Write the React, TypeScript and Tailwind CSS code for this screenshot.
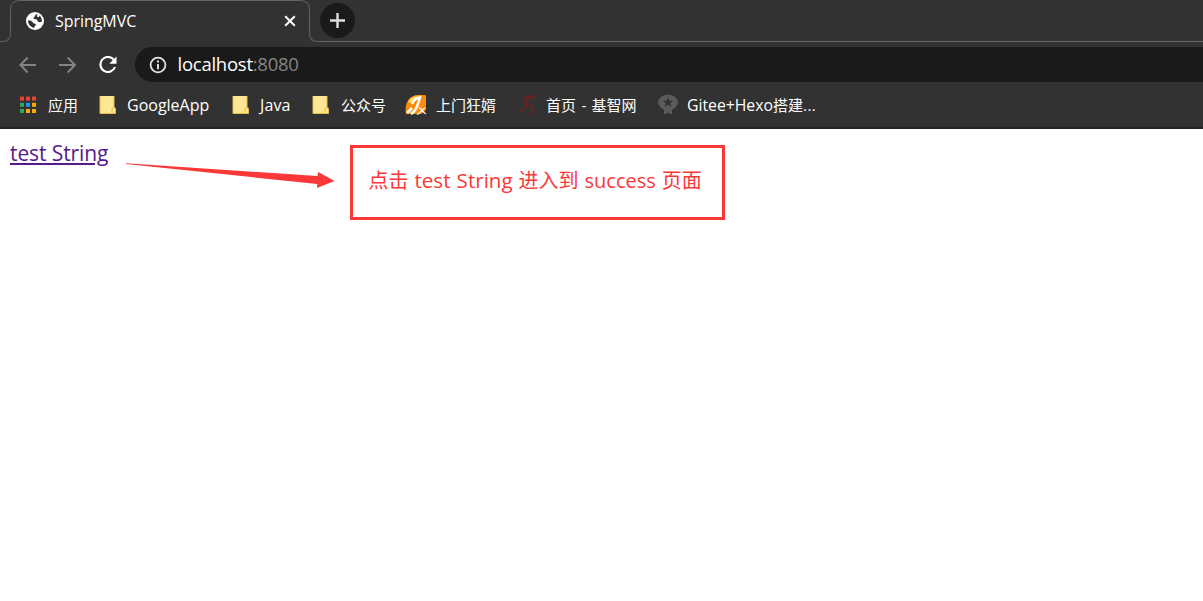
import type { ReactNode } from 'react';

const uiFont = "font-['Open_Sans','Noto_Sans_CJK_SC',sans-serif]";

function Globe() {
  return (
    <svg className="h-[18px] w-[18px] shrink-0" viewBox="0 0 18 18">
      <circle cx="9" cy="9" r="9" fill="#fff" />
      <path d="M10.4 2.3 C8.6 3.2 9.4 4.3 7.8 5.4 C6.8 6.2 8.6 7.2 10.2 7.3 C11.6 7.6 11.2 9.6 12.6 10 C13.8 10.3 15 10.2 15.9 9.6 C16.1 6.7 15 4.7 13.2 3.4 C13.6 4.6 12.6 5.4 11.6 5 C10.6 4.6 11 3.4 11.6 2.6 Z" fill="#323232" />
      <path d="M2 8.4 C2 12 4.3 14.8 8.2 15.9 C7.8 14.6 9.8 14.2 9.9 12.6 C9.8 11.4 7.2 11.8 6.6 10.2 C6.2 8.8 4.6 8.3 2 8.4 Z" fill="#323232" />
    </svg>
  );
}

function Apps() {
  const colors = ['#ea4335', '#ea4335', '#ea4335', '#34a853', '#2196f3', '#fbab05', '#34a853', '#fbab05', '#fbab05'];
  return (
    <svg className="h-[18px] w-[18px]" viewBox="0 0 18 18">
      {colors.map((c, i) => (
        <rect key={i} x={1 + (i % 3) * 6} y={0.6 + Math.floor(i / 3) * 6.2} width="4" height="4" fill={c} />
      ))}
    </svg>
  );
}

function Folder() {
  return (
    <svg className="h-[20px] w-[18px]" viewBox="0 0 18 20">
      <path d="M1 1 H15 V12 L16.5 13 V18.5 H1 Z" fill="#ffe694" />
      <path d="M1 1 V18.5 H16.5 V13.5 M15 1 V12.5 L13 14 V18" fill="none" stroke="#e6bd45" strokeWidth="1" />
    </svg>
  );
}

function OrangeLeaf() {
  return (
    <svg className="h-[22px] w-[22px]" viewBox="0 0 22 22">
      <path d="M1 20 C-1 10 4 1 13 1 H20 Q21 1 21 3 V15 Q19 20 14 20 Z" fill="#ff8b0b" />
      <path d="M3 9 Q5 2 13 2 L8 8 Z" fill="#ffd35a" />
      <path d="M15.5 2 C13.5 7 12.5 17 6 20 M15.5 3.2 C11 4 8 7 7 10 M2 19 L7 14" fill="none" stroke="#fff" strokeWidth="2.6" />
      <path d="M14 14 C17 14 17.5 19 21 20 M20 14 C17 15 16 19 12 20.5" fill="none" stroke="#fff" strokeWidth="1.3" />
    </svg>
  );
}

function RedStroke() {
  return (
    <svg className="h-[22px] w-[20px]" viewBox="0 0 20 22" fill="none" stroke="#7d1c1f" strokeWidth="1.3">
      <path d="M17 2.2 C12 1.2 8.5 3 6 5.5 C6 9 10.5 9.5 8.5 12.5 C7 15 4 15 1 17" />
      <path d="M16.5 3.8 C12 3.8 9.2 5 9 8 C10 11.5 16.5 12 15.5 16 C14.5 18.5 12.5 20 10.5 20.6" />
    </svg>
  );
}

function Ribbon() {
  return (
    <svg className="h-[22px] w-[20px]" viewBox="0 0 20 22">
      <path d="M6 13 H14 V20.5 L10 18.7 L6 20.5 Z" fill="#5b5b5b" />
      <ellipse cx="10" cy="8.5" rx="9.8" ry="7.8" fill="#5b5b5b" />
      <path d="M10 3 L11.4 6.7 L15.3 6.8 L12.2 9.2 L13.3 13 L10 10.8 L6.7 13 L7.8 9.2 L4.7 6.8 L8.6 6.7 Z" fill="#323232" />
    </svg>
  );
}

function Bookmark({ icon, iconBox, className, children }: { icon: ReactNode; iconBox: string; className: string; children: ReactNode }) {
  return (
    <div className="flex h-full shrink-0 items-center">
      <div className={`flex shrink-0 items-center ${iconBox}`}>{icon}</div>
      <span className={`shrink-0 leading-5 whitespace-nowrap text-white ${className}`}>{children}</span>
    </div>
  );
}

export default function App() {
  return (
    <div className={`flex h-[601px] w-[1203px] flex-col overflow-hidden bg-white ${uiFont}`}>
      <header className="flex h-[129px] shrink-0 flex-col border-b-2 border-[#222324] bg-[#323232]">
        <div className="flex h-[42px] shrink-0">
          <div className="-mr-px h-[12px] w-[11px] shrink-0 self-end rounded-br-[8px] border-r border-b border-[#636363]" />
          <div className="flex h-[31px] w-[300px] shrink-0 rounded-t-[9px] border border-b-0 border-[#636363]">
            <div className="flex h-[40px] w-full items-center pl-[15px]">
              <Globe />
              <span className="ml-[11px] w-[228px] shrink-0 text-[16px] leading-5 tracking-[-0.05px] text-white">SpringMVC</span>
              <svg className="h-[14px] w-[14px] shrink-0" viewBox="0 0 14 14" stroke="#fff" strokeWidth="2">
                <path d="M2.2 2.2 L11.8 11.8 M11.8 2.2 L2.2 11.8" />
              </svg>
            </div>
          </div>
          <div className="-ml-px h-[12px] flex-1 self-end rounded-bl-[8px] border-b border-l border-[#636363]">
            <div className="-mt-[27px] ml-[10px] flex h-[35px] w-[35px] items-center justify-center rounded-full bg-[#1a1a1a]">
              <svg className="h-[15px] w-[15px]" viewBox="0 0 15 15" stroke="#dedede" strokeWidth="2.4">
                <path d="M7.5 0 V15 M0 7.5 H15" />
              </svg>
            </div>
          </div>
        </div>
        <div className="mt-[5px] flex h-[35px] shrink-0 items-center pl-[19px]">
          <svg className="h-[18px] w-[18px]" viewBox="0 0 18 18" fill="none" stroke="#858585" strokeWidth="1.9">
            <path d="M17 9 H1.7 M8.7 1.5 L1.4 9 L8.7 16.5" />
          </svg>
          <svg className="ml-[22px] h-[18px] w-[18px]" viewBox="0 0 18 18" fill="none" stroke="#858585" strokeWidth="1.9">
            <path d="M0 9 H15.7 M8.7 1.5 L16 9 L8.7 16.5" />
          </svg>
          <svg className="ml-[22px] h-[18px] w-[18px]" viewBox="0 0 18 18">
            <path d="M15 4 A7.5 7.5 0 1 0 16 11" fill="none" stroke="#fff" strokeWidth="2.1" />
            <path d="M17.5 0.5 V7.7 H10.3 Z" fill="#fff" />
          </svg>
          <div className="ml-[18px] flex h-[35px] flex-1 items-center rounded-l-full bg-[#1a1a1a] pl-[13.5px]">
            <svg className="h-[18px] w-[18px]" viewBox="0 0 18 18">
              <circle cx="9" cy="9" r="7.4" fill="none" stroke="#e3e3e3" strokeWidth="1.8" />
              <path d="M9 8 V13.2 M9 4.6 V6.5" stroke="#e3e3e3" strokeWidth="1.9" />
            </svg>
            <p className="mb-[2px] ml-[11px] text-[18.5px] leading-6 tracking-[-0.25px] text-white">
              <span>localhost</span><span className="text-[#858585]">:8080</span>
            </p>
          </div>
        </div>
        <nav className="flex h-[45px] shrink-0 items-center pl-[19px]">
          <Bookmark icon={<Apps />} iconBox="w-[29px]" className="w-[51px] text-[15px]">应用</Bookmark>
          <Bookmark icon={<Folder />} iconBox="w-[28px]" className="w-[105px] text-[16px]">GoogleApp</Bookmark>
          <Bookmark icon={<Folder />} iconBox="w-[28px]" className="w-[52px] text-[16px] tracking-[0.1px]">Java</Bookmark>
          <Bookmark icon={<Folder />} iconBox="w-[29px]" className="w-[64px] text-[15px]">公众号</Bookmark>
          <Bookmark icon={<OrangeLeaf />} iconBox="w-[31px]" className="w-[82px] text-[15px]">上门狂婿</Bookmark>
          <Bookmark icon={<RedStroke />} iconBox="w-[28px]" className="w-[112px] text-[15px] [word-spacing:1.5px]">首页 - 基智网</Bookmark>
          <Bookmark icon={<Ribbon />} iconBox="w-[29px]" className="text-[15px]">
            <span className="text-[15.75px]">Gitee+Hexo</span>搭建<span className="tracking-[0.5px]">...</span>
          </Bookmark>
        </nav>
      </header>
      <main className="flex items-start">
        <a href="#" className="mt-[10px] ml-[10px] w-[116px] text-[21px] leading-[28px] tracking-[-0.1px] whitespace-nowrap text-[#551a8b] underline decoration-2 underline-offset-[2px]">test String</a>
        <svg className="mt-[31px] h-[32px] w-[210px]" viewBox="0 0 210 32">
          <path d="M0 3.2 L191.5 16 L192.3 12 L208.5 21 L191 28 L191.3 24 L0 4 Z" fill="#fb3838" />
        </svg>
        <div className="mt-[16px] ml-[14px] h-[75px] w-[375px] border-[3px] border-[#fb3838] pt-[18px] pl-[15.5px] text-[20px] leading-[28px] [word-spacing:0.75px] whitespace-nowrap text-[#fb3838]">
          点击 <span className="text-[20.6px]">test String</span> 进入到 success 页面
        </div>
      </main>
    </div>
  );
}
